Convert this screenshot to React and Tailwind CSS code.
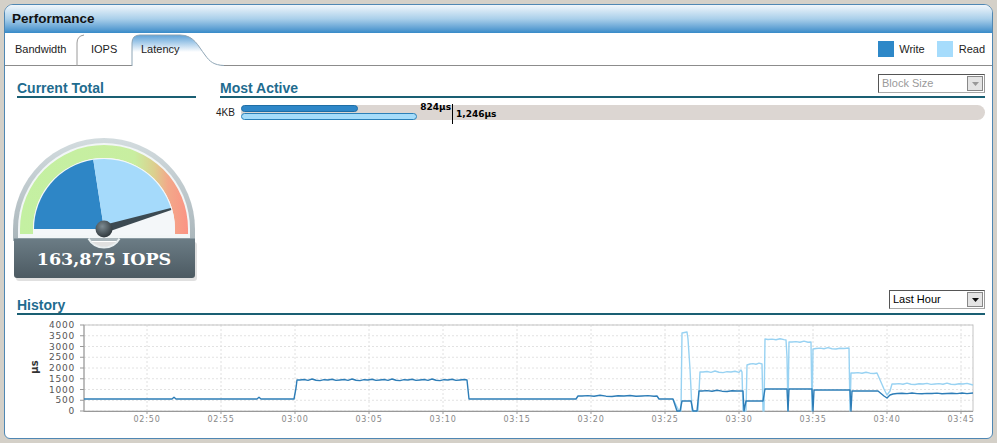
import React from "react";

const sans = { fontFamily: '"Liberation Sans", Arial, sans-serif' };

// chart helpers (page coordinates, viewBox matches the page)
const yv = (v) => 412 - v * 0.0215;
const ticksX = ["02:50", "02:55", "03:00", "03:05", "03:10", "03:15", "03:20", "03:25", "03:30", "03:35", "03:40", "03:45"];
const ticksY = [0, 500, 1000, 1500, 2000, 2500, 3000, 3500, 4000];

const wiggle = (x1, x2, y, step, amp) => {
  const pts = [];
  const pat = [0, -0.6, 0.4, -1.2, 0.3, 0.8, -0.4, 0, -0.9, 0.5];
  let i = 0;
  for (let x = x1; x <= x2; x += step) {
    pts.push([x, y + pat[i % pat.length] * amp]);
    i++;
  }
  return pts;
};

const writePts = [
  [84, 400], [172, 400], [174, 398.3], [176, 400], [257, 400], [259, 398.3], [261, 400], [294, 400],
  [296, 389], [297, 381],
  ...wiggle(300, 464, 381, 4, 0.8),
  [467, 381], [469, 400], [576, 400], [578, 397],
  ...wiggle(582, 654, 397, 6, 0.6),
  [657, 397], [659, 400], [673, 400], [677, 412], [680, 412], [682, 402], [691, 402], [693, 412], [697, 412],
  [699, 392], ...wiggle(702, 740, 392, 5, 0.6), [743, 392], [744, 412], [746, 402], [763, 402],
  [765, 390], [787, 390], [788, 412], [789, 390], [812, 390], [813, 412], [814, 391], [850, 391],
  [851, 412], [852, 392], [878, 392], [884, 397], [887, 399], [890, 396], [893, 395],
  ...wiggle(897, 970, 394.5, 5, 0.4), [973, 394],
];

const readPts = [
  [673, 400], [679, 412], [681, 412], [682, 334], [687, 333], [688, 340], [690, 370], [691, 390], [692, 412],
  [698, 412], [700, 373], ...wiggle(703, 740, 373, 4, 0.8), [741, 371], [742, 373], [743, 412], [746, 412],
  [747, 366], ...wiggle(750, 760, 365, 3, 0.7), [762, 365], [763, 412], [764, 412],
  [765, 340], ...wiggle(768, 784, 340.5, 4, 0.6), [786, 341], [787, 358], [788, 412],
  [789, 343], ...wiggle(792, 809, 343, 4, 0.7), [811, 343], [812, 412],
  [813, 350], ...wiggle(816, 846, 349.5, 4, 0.7), [849, 349], [850, 412],
  [851, 374], ...wiggle(854, 874, 374, 4, 0.6), [877, 374], [884, 390], [887, 396], [890, 392], [892, 385],
  ...wiggle(895, 970, 385, 4, 0.7), [973, 386],
];

const toStr = (pts) => pts.map((p) => p.join(",")).join(" ");

const HistoryChart = () => (
  <svg width="967" height="112" viewBox="18 318 967 112" className="block">
    {ticksY.map((v) => (
      <line key={v} x1="84" x2="973" y1={yv(v)} y2={yv(v)} stroke="#e2e2e2" strokeDasharray="2 2" />
    ))}
    {ticksX.map((t, i) => (
      <line key={t} x1={147 + 74 * i} x2={147 + 74 * i} y1="326" y2="412" stroke="#e0e0e0" strokeDasharray="2 2" />
    ))}
    <rect x="84" y="326" width="889" height="86" fill="none" stroke="#c4c4c4" />
    <line x1="84" x2="84" y1="326" y2="413" stroke="#999" />
    <line x1="84" x2="973" y1="412.5" y2="412.5" stroke="#999" />
    {ticksY.map((v) => (
      <g key={v}>
        <line x1="80" x2="84" y1={yv(v)} y2={yv(v)} stroke="#999" />
        <text x="75" y={yv(v) + 3} textAnchor="end" fontSize="9" letterSpacing="0.8" fill="#555" fontFamily="DejaVu Sans, sans-serif">
          {v}
        </text>
      </g>
    ))}
    {ticksX.map((t, i) => (
      <g key={t}>
        <line x1={147 + 74 * i} x2={147 + 74 * i} y1="412" y2="415" stroke="#999" />
        <text x={147 + 74 * i} y="423" textAnchor="middle" fontSize="8" letterSpacing="0.8" fill="#888" fontFamily="DejaVu Sans, sans-serif">
          {t}
        </text>
      </g>
    ))}
    <text x="38" y="368" transform="rotate(-90 38 368)" textAnchor="middle" fontSize="10" fontWeight="bold" fill="#333" fontFamily="DejaVu Sans, sans-serif">
      µs
    </text>
    <polyline points={toStr(readPts)} fill="none" stroke="#98d2f2" strokeWidth="1.4" strokeLinejoin="round" />
    <polyline points={toStr(writePts)} fill="none" stroke="#2d7db7" strokeWidth="1.4" strokeLinejoin="round" />
  </svg>
);

// gauge, center (104,229)
const cx = 104;
const cy = 229;
const pt = (r, deg) => [cx + r * Math.cos((deg * Math.PI) / 180), cy - r * Math.sin((deg * Math.PI) / 180)];
const wedge = (r, a1, a2) => {
  const [x1, y1] = pt(r, a1);
  const [x2, y2] = pt(r, a2);
  return `M${cx},${cy} L${x1},${y1} A${r},${r} 0 0 1 ${x2},${y2} Z`;
};

const Gauge = () => (
  <svg width="184" height="147" viewBox="13 135 184 147" className="block">
    <defs>
      <linearGradient id="dome" x1="0" y1="0" x2="0" y2="1">
        <stop offset="0" stopColor="#d3dcdf" />
        <stop offset="1" stopColor="#aab6bb" />
      </linearGradient>
      <linearGradient id="band" x1="20" y1="0" x2="188" y2="0" gradientUnits="userSpaceOnUse">
        <stop offset="0" stopColor="#c4f0a2" />
        <stop offset="0.68" stopColor="#c8eea0" />
        <stop offset="0.8" stopColor="#dccf8e" />
        <stop offset="0.88" stopColor="#f2a98a" />
        <stop offset="1" stopColor="#fb9384" />
      </linearGradient>
      <linearGradient id="plate" x1="0" y1="0" x2="0" y2="1">
        <stop offset="0" stopColor="#6c7d86" />
        <stop offset="1" stopColor="#4c5a62" />
      </linearGradient>
      <radialGradient id="knob" cx="0.4" cy="0.35" r="0.7">
        <stop offset="0" stopColor="#7d8b92" />
        <stop offset="1" stopColor="#2b3337" />
      </radialGradient>
    </defs>
    <rect x="16" y="242" width="181" height="39" rx="3" fill="#000" opacity="0.12" />
    <path d="M13,241 L13,229 A91,91 0 0 1 195,229 L195,241 Z" fill="url(#dome)" />
    <path d="M18,238 L18,229 A86,86 0 0 1 190,229 L190,238 Z" fill="#f2f6f7" />
    <path d="M20,234 L20,229 A84,84 0 0 1 188,229 L188,234 L175,234 L175,229 A71,71 0 0 0 33,229 L33,234 Z" fill="url(#band)" />
    <path d="M33,235 L33,229 A71,71 0 0 1 175,229 L175,235 Z" fill="#f4f7f9" />
    <path d={wedge(70, 180, 98.8)} fill="#2e86c6" />
    <path d={wedge(70, 98.8, 16)} fill="#a5dafb" />
    <path d="M14,238 L88.4,238 A18,18 0 0 0 119.6,238 L195,238 L195,275 Q195,278 192,278 L17,278 Q14,278 14,275 Z" fill="url(#plate)" />
    <path d="M88.4,238.5 A18,18 0 0 0 119.6,238.5" fill="none" stroke="#e9eff1" strokeWidth="2" />
    <line x1="14" x2="88" y1="238.5" y2="238.5" stroke="#8a9aa2" />
    <line x1="120" x2="195" y1="238.5" y2="238.5" stroke="#8a9aa2" />
    <polygon points="105.2,232.8 102.8,225.2 170.7,208 171.3,210" fill="#3c4a52" />
    <circle cx={cx} cy={cy} r="8.5" fill="url(#knob)" />
    <text x="104" y="265" textAnchor="middle" fontSize="17.5" fontWeight="bold" fill="#fff" fontFamily='"DejaVu Serif", serif'>
      163,875 IOPS
    </text>
  </svg>
);

const Select = ({ label, muted, className }) => (
  <div className={`flex h-[19px] items-center border border-[#555] border-r-[#999] border-b-[#aaa] bg-white ${className}`}>
    <span className={`flex-1 pl-[3px] text-[11px] leading-none ${muted ? "text-[#9a9a9a]" : "text-black"}`}>{label}</span>
    <span className="mr-[1px] flex h-[15px] w-[16px] items-center justify-center border border-[#888] bg-[#e4e4e4]">
      <svg width="7" height="4" viewBox="0 0 7 4">
        <polygon points="0,0 7,0 3.5,4" fill={muted ? "#999" : "#111"} />
      </svg>
    </span>
  </div>
);

const Heading = ({ children }) => (
  <span className="text-[14px] font-bold leading-[16px] text-[#1f6c8f]">{children}</span>
);

export default function App() {
  return (
    <div className="h-[443px] w-[997px] bg-[#d4d0c8] px-[4px] pt-[4px]" style={sans}>
      <div className="flex h-[435px] flex-col overflow-hidden rounded-t-[9px] rounded-b-[6px] border border-[#4f87b3] bg-white">
        {/* title bar */}
        <div className="flex h-[28px] items-center bg-gradient-to-b from-[#f0f6fb] via-[#a9cfea] to-[#378bc8] pl-[7px]">
          <span className="text-[13.5px] font-bold text-[#111]">Performance</span>
        </div>

        {/* tabs */}
        <div className="relative flex h-[33px] items-center border-b border-[#8c8c8c] text-[11px] text-[#222]">
          <svg className="absolute left-0 top-0" width="987" height="33" viewBox="5 33 987 33">
            <defs>
              <linearGradient id="tab" x1="0" y1="0" x2="0" y2="1">
                <stop offset="0" stopColor="#5ea2d8" />
                <stop offset="0.55" stopColor="#ffffff" />
              </linearGradient>
            </defs>
            <path d="M77,66 L77,43 Q77,36 84,35" fill="none" stroke="#9a9a9a" />
            <path d="M132,66 L132,43 Q132,35 140,35 L180,35 C194,35 198,46 205,55 C210,62 214,65 224,65.5 L224,66 Z" fill="url(#tab)" />
            <path d="M132,66 L132,43 Q132,35 140,35 L180,35 C194,35 198,46 205,55 C210,62 214,65 224,65.5" fill="none" stroke="#8ea5b5" />
          </svg>
          <span className="relative ml-[10px] w-[76px]">Bandwidth</span>
          <span className="relative w-[50px]">IOPS</span>
          <span className="relative">Latency</span>
          <div className="relative ml-auto mr-[7px] flex items-center">
            <span className="h-[16px] w-[16px] bg-[#2e88c8]" />
            <span className="ml-[5px] mr-[12px]">Write</span>
            <span className="h-[16px] w-[16px] bg-[#a6dcfc]" />
            <span className="ml-[6px]">Read</span>
          </div>
        </div>

        {/* top section */}
        <div className="flex h-[221px] pl-[8px] pr-[7px]">
          <div className="flex w-[184px] flex-col">
            <div className="ml-[4px] flex h-[32px] w-[179px] items-end border-b-2 border-[#1a5f73]">
              <Heading>Current Total</Heading>
            </div>
            <div className="mt-[37px]">
              <Gauge />
            </div>
          </div>

          <div className="ml-[23px] flex flex-1 flex-col">
            <div className="flex h-[32px] items-end justify-between border-b-2 border-[#1a5f73]">
              <Heading>Most Active</Heading>
              <Select label="Block Size" muted className="mb-[3px] w-[107px]" />
            </div>
            <div className="-ml-[4px] mt-[7px] flex items-center">
              <span className="w-[25px] text-[10px] text-[#222]">4KB</span>
              <div className="relative flex h-[15px] flex-1 flex-col gap-[1px] rounded-full bg-[#dcd6d2]">
                <div className="h-[7px] w-[117px] rounded-full border border-[#1f6ea5] bg-[#2e87c8]" />
                <div className="h-[7px] w-[176px] rounded-full border border-[#2a80b8] bg-[#a5dcfa]" />
                <span className="absolute left-[211px] top-[-1px] h-[20px] w-px bg-black" />
                <span className="absolute right-[calc(100%-211px)] top-[-3px] pr-[1px] text-[9px] font-bold leading-[10px] text-black" style={{ fontFamily: '"DejaVu Sans", sans-serif' }}>
                  824µs
                </span>
                <span className="absolute left-[215px] top-[4px] text-[9px] font-bold leading-[10px] text-black" style={{ fontFamily: '"DejaVu Sans", sans-serif' }}>
                  1,246µs
                </span>
              </div>
            </div>
          </div>
        </div>

        {/* history */}
        <div className="pl-[12px] pr-[7px]">
          <div className="flex h-[28px] items-end justify-between border-b-2 border-[#1a5f73]">
            <Heading>History</Heading>
            <Select label="Last Hour" className="mb-[4px] w-[96px]" />
          </div>
        </div>
        <div className="ml-[13px] mt-[2px]">
          <HistoryChart />
        </div>
      </div>
    </div>
  );
}
